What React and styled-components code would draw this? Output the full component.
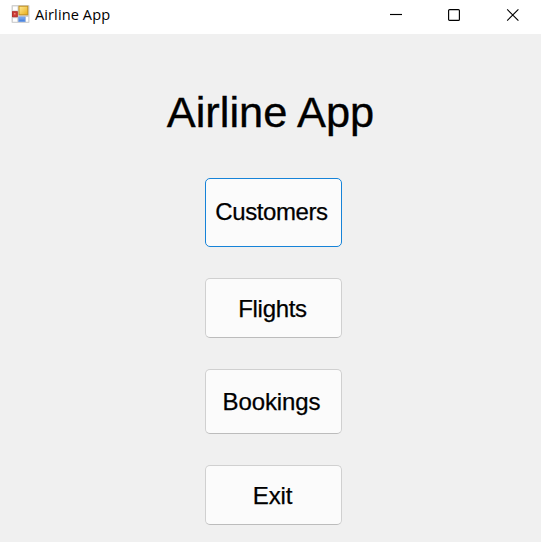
import React from 'react';
import styled, { createGlobalStyle } from 'styled-components';

const Global = createGlobalStyle`
  * { box-sizing: border-box; }
  body { margin: 0; overflow: hidden; background: #f0f0f0; }
`;
const Window = styled.div`
  width: 541px; height: 542px; display: flex; flex-direction: column;
  background: #f0f0f0; color: #000; overflow: hidden;
  font-family: "Liberation Sans", Arial, sans-serif;
`;
const TitleBar = styled.header`
  height: 34px; flex: none; display: flex; align-items: flex-start;
  background: #fff; padding: 5px 0 0 11px;
`;
const AppIcon = styled.svg`
  width: 19px; height: 19px; flex: none;
`;
const Caption = styled.span`
  flex: 1; margin: -1px 0 0 5px; font: 14.6px/20px "Open Sans", "Noto Sans", sans-serif;
  letter-spacing: 0.08px; white-space: nowrap;
`;
const Controls = styled.div`
  display: flex;
`;
const Control = styled.div`
  width: 58px; height: 20px; display: flex; align-items: center; justify-content: center;
`;
const Glyph = styled.svg`
  width: 12px; height: 12px; fill: none; stroke: #000; stroke-width: 1.15; overflow: visible;
`;
const Body = styled.main`
  flex: 1; display: flex; flex-direction: column; align-items: center; padding-left: 5px;
`;
const Heading = styled.h1`
  margin: 54px 5px 0 0; height: 48px; font-size: 43.4px; line-height: 48px; font-weight: 400; white-space: nowrap;
  -webkit-text-stroke: 0.35px #000;
`;
const MenuButton = styled.button`
  width: 137px; height: ${p => p.$h}px; margin-top: ${p => p.$gap}px; flex: none;
  padding: ${p => p.$drop || 0}px ${p => p.$shift || 0}px ${p => p.$lift || 0}px 0;
  border: 1px solid ${p => (p.$focused ? '#1683d8' : '#d0d0d0')};
  border-bottom-color: ${p => (p.$focused ? '#1683d8' : '#bcbcbc')};
  border-radius: 5px; background: #fbfbfb; color: #000;
  font: 24px/28px "Liberation Sans", Arial, sans-serif;
  letter-spacing: ${p => p.$track || 0}px;
  -webkit-text-stroke: 0.25px #000;
`;

export default function App() {
  return (
    <Window>
      <Global />
      <TitleBar>
        <AppIcon viewBox="0 0 19 19">
          <defs>
            <linearGradient id="gold" x1="0" y1="0" x2="1" y2="1">
              <stop offset="0" stopColor="#ffeb98" /><stop offset="1" stopColor="#e9ad16" />
            </linearGradient>
            <linearGradient id="blue" x1="0" y1="0" x2="0" y2="1">
              <stop offset="0" stopColor="#84b2f5" /><stop offset="1" stopColor="#3e78d8" />
            </linearGradient>
          </defs>
          <rect x=".5" width="18" height="18" rx="1" fill="#d2d2d2" />
          <rect x="2" y="1.5" width="4.5" height="4" fill="#fff" />
          <rect x="2" y="13.2" width="4.2" height="3.5" fill="#fff" />
          <rect x="15" y="12" width="2.2" height="4.7" fill="#fff" />
          <rect x="1.5" y="6.7" width="4.8" height="5" fill="#cf3d36" stroke="#b3302c" />
          <rect x="3" y="8" width="1.5" height="1.5" fill="#e88a80" />
          <rect x="8" y="1.2" width="8.8" height="8.6" fill="url(#gold)" stroke="#c2901d" />
          <rect x="7.8" y="12" width="6.2" height="4.6" fill="url(#blue)" stroke="#6a9be8" strokeWidth=".8" />
        </AppIcon>
        <Caption>Airline App</Caption>
        <Controls>
          <Control><Glyph><path d="M0 5.5h12" /></Glyph></Control>
          <Control><Glyph><rect x=".6" y=".6" width="10.8" height="10.8" rx="1" /></Glyph></Control>
          <Control><Glyph><path d="M1.2.4l11.2 11.2M12.4.4L1.2 11.6" /></Glyph></Control>
        </Controls>
      </TitleBar>
      <Body>
        <Heading>Airline App</Heading>
        <MenuButton $h={69} $gap={42} $track={-0.4} $shift={3} $lift={1} $focused>Customers</MenuButton>
        <MenuButton $h={60} $gap={31} $track={-0.3} $shift={1} $drop={1}>Flights</MenuButton>
        <MenuButton $h={65} $gap={31} $track={-0.08} $shift={3}>Bookings</MenuButton>
        <MenuButton $h={60} $gap={31} $drop={2} $shift={1} $track={-0.15}>Exit</MenuButton>
      </Body>
    </Window>
  );
}
